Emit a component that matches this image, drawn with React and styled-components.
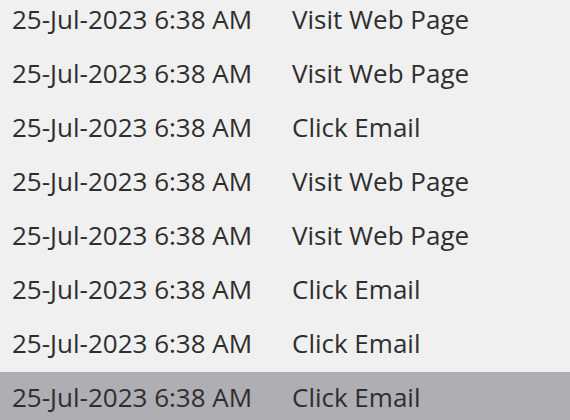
import React from "react"
import styled, { createGlobalStyle } from "styled-components"

const GlobalStyle = createGlobalStyle`
  html, body {
    margin: 0;
    padding: 0;
    background: #f0f0f0;
    overflow: hidden;
  }
`

const ActivityList = styled.div`
  display: flex;
  flex-direction: column;
  margin-top: -6px;
  font-family: "Open Sans", "Liberation Sans", sans-serif;
  color: #2e2e2e;
`

const Row = styled.div`
  box-sizing: border-box;
  display: grid;
  grid-template-columns: 280px 1fr;
  align-items: center;
  height: 54px;
  padding: 0 0 4px 12px;
  font-size: 26px;
  line-height: 30px;
  background: ${(p) => (p.selected ? "#afaeb3" : "transparent")};
`

const Cell = styled.span`
  white-space: nowrap;
`

const rows = [
  "Visit Web Page",
  "Visit Web Page",
  "Click Email",
  "Visit Web Page",
  "Visit Web Page",
  "Click Email",
  "Click Email",
  "Click Email",
]

export default function App() {
  return (
    <>
      <GlobalStyle />
      <ActivityList>
        {rows.map((action, i) => (
          <Row key={i} selected={i === rows.length - 1}>
            <Cell>25-Jul-2023 6:38 AM</Cell>
            <Cell>{action}</Cell>
          </Row>
        ))}
      </ActivityList>
    </>
  )
}
